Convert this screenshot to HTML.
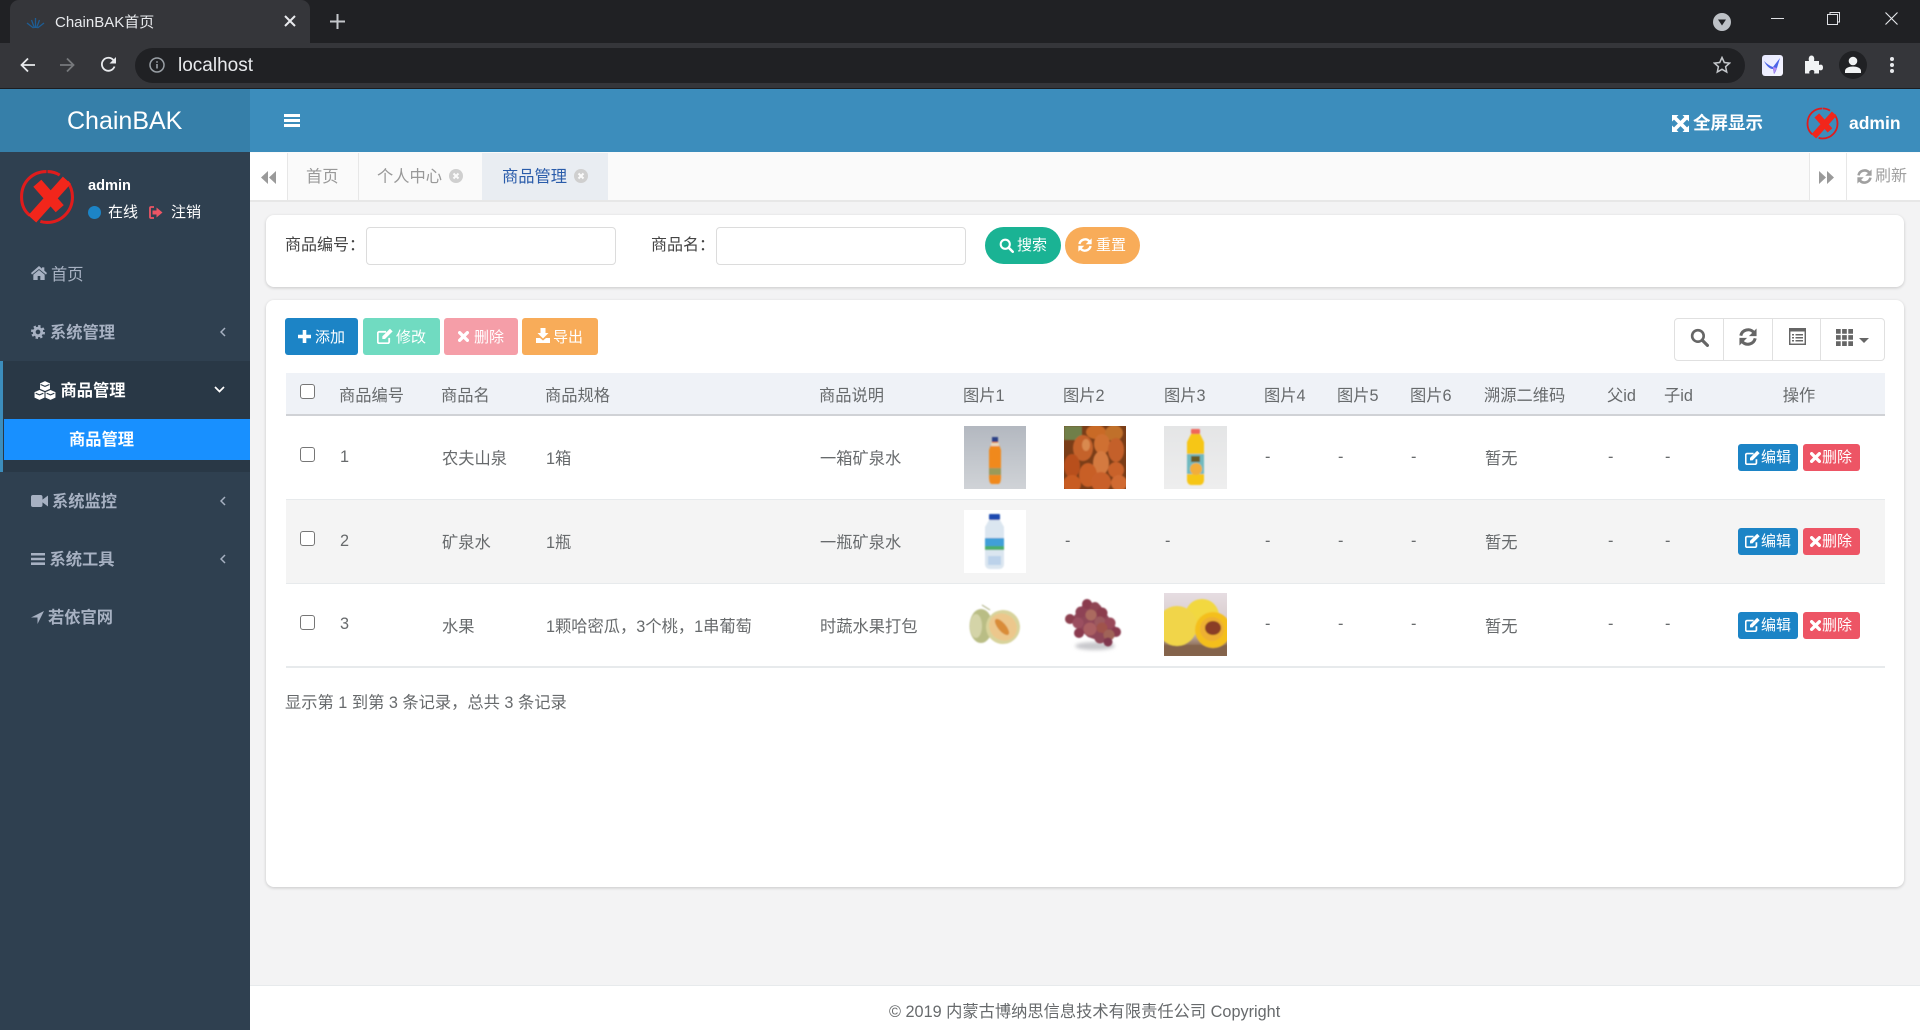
<!DOCTYPE html>
<html lang="zh-CN">
<head>
<meta charset="utf-8">
<title>ChainBAK首页</title>
<style>
*{box-sizing:border-box}
html,body{margin:0;padding:0;width:1920px;height:1030px;overflow:hidden;background:#f3f3f4;font-family:"Liberation Sans","Noto Sans CJK SC",sans-serif;color:#676a6c;font-size:16.25px}
.a{position:absolute}
.t{position:absolute;white-space:nowrap;line-height:20px;height:20px}
svg{position:absolute;display:block;overflow:hidden}
.menu{color:#a7b1c2;font-size:16.25px;font-weight:700}
.card{position:absolute;background:#fff;border-radius:8px;box-shadow:0 1px 3px rgba(0,0,0,.18)}
.inp{position:absolute;top:227px;width:250px;height:38px;border:1px solid #dcdcdc;border-radius:4px;background:#fff}
.btn{position:absolute;top:318px;height:37px;border-radius:3px}
.btn .t{color:#fff;font-size:15px;top:10px}
table{position:absolute;left:286px;top:373px;width:1599px;border-collapse:collapse;table-layout:fixed;color:#676a6c;font-size:16.25px}
th{height:42px;background:#eff2f7;font-weight:400;text-align:left;padding:0;border-bottom:2px solid #d0d2d6}
th.n{text-indent:-1px}
td{padding:0 0 0 1px;border-bottom:1px solid #e7eaec;vertical-align:middle}
tr.r td{height:84px}
tr.s td{background:#f4f4f4}
tr.l td{border-bottom:2px solid #e7eaec}
.cb{display:block;position:relative;width:15px;height:15px;margin-left:14px;border:1.5px solid #767676;border-radius:3px;background:#fff;top:-2.5px}
.ph{position:relative;display:block;width:62px;height:63px}
.op{position:relative;display:block;width:172px;height:27px;top:.5px}
.op i{position:absolute;top:0;height:27px;border-radius:3px;color:#fff;font-style:normal;font-size:15px;line-height:27px;white-space:nowrap}
.e{left:25px;width:60px;background:#1c84c6;padding-left:23px}
.d{left:90px;width:57px;background:#ed5565;padding-left:19px}
</style>
</head>
<body>
<svg width="0" height="0" style="position:absolute">
<defs>
<filter id="bl" x="-20%" y="-20%" width="140%" height="140%"><feGaussianBlur stdDeviation=".9"/></filter>
<filter id="bl2" x="-50%" y="-50%" width="200%" height="200%"><feGaussianBlur stdDeviation="1.8"/></filter>
<symbol id="x" viewBox="0 0 55 55">
<path d="M27 2.500C13 2.500 2.500 13 2.500 27.500c0 8 3 14 8 18M21 51.500c2 .6 4.500 1 6.500 1 14 0 25-11 25-25 0-6-2-11-5-15M40 6c-3-2-8-3.500-12-3.500" fill="none" stroke="#e01c1c" stroke-width="3"/>
<path d="M47 11L13 49M18 14L40 39" fill="none" stroke="#f2261b" stroke-width="10.500"/>
</symbol>
<symbol id="edit" viewBox="2 1 21 21">
<path d="M18 14v5a2 2 0 0 1-2 2H5a2 2 0 0 1-2-2V8a2 2 0 0 1 2-2h9" fill="none" stroke="#fff" stroke-width="2.400"/>
<path d="M9 12L19 2l3.500 3.500-10 10H9z" fill="#fff"/>
</symbol>
<symbol id="del" viewBox="2 2 20 20"><path d="M5 5l14 14M19 5L5 19" stroke="#fff" stroke-width="6" fill="none" stroke-linecap="round"/></symbol>
<symbol id="ref" viewBox="2 2 20 20">
<path d="M4 10.500A8.300 8.300 0 0 1 18.500 7" fill="none" stroke="currentColor" stroke-width="3.400"/>
<path d="M21.500 2.500v8.500h-8.500z" fill="currentColor"/>
<path d="M20 13.500A8.300 8.300 0 0 1 5.500 17" fill="none" stroke="currentColor" stroke-width="3.400"/>
<path d="M2.500 21.500v-8.500h8.500z" fill="currentColor"/>
</symbol>
<symbol id="srch" viewBox="0 0 24 24"><circle cx="10" cy="10" r="7.300" fill="none" stroke="currentColor" stroke-width="3.300"/><path d="M15.500 15.500l6.500 6.500" stroke="currentColor" stroke-width="4" stroke-linecap="round"/></symbol>
<symbol id="cl" viewBox="0 0 14 14"><circle cx="7" cy="7" r="7" fill="#cfcfcf"/><path d="M4.500 4.500l5 5M9.500 4.500l-5 5" stroke="#fafafa" stroke-width="2"/></symbol>
</defs>
</svg>

<!-- browser chrome -->
<div class="a" style="left:0;top:0;width:1920px;height:43px;background:#202124"></div>
<div class="a" style="left:0;top:43px;width:1920px;height:45px;background:#35363a"></div>
<div class="a" style="left:0;top:88px;width:1920px;height:1px;background:#1c1d20"></div>
<div class="a" style="left:10px;top:0;width:300px;height:43px;background:#35363a;border-radius:9px 9px 0 0"></div>
<svg style="left:26px;top:17px" width="19" height="12" viewBox="0 0 19 12"><path d="M9.500 1v10M5.500 3l3 8M13.500 3l-3 8M1 6l6.500 5M18 6l-6.500 5" stroke="#1e5d94" stroke-width="1.300" fill="none"/></svg>
<div class="t" style="left:55px;top:13px;color:#e8eaed;font-size:15px">ChainBAK首页</div>
<svg style="left:284px;top:15px" width="12" height="12" viewBox="0 0 12 12"><path d="M1 1l10 10M11 1L1 11" stroke="#e8eaed" stroke-width="2"/></svg>
<svg style="left:330px;top:14px" width="15" height="15" viewBox="0 0 15 15"><path d="M7.500 0v15M0 7.500h15" stroke="#c4c7cb" stroke-width="2"/></svg>
<svg style="left:1713px;top:13px" width="18" height="18" viewBox="0 0 18 18"><circle cx="9" cy="9" r="9" fill="#bdc1c6"/><path d="M5 6.500h8L9 12.500z" fill="#202124"/></svg>
<div class="a" style="left:1771px;top:18px;width:13px;height:1px;background:#dfe1e5"></div>
<svg style="left:1827px;top:12px" width="13" height="13" viewBox="0 0 13 13"><rect x=".5" y="2.500" width="10" height="10" fill="none" stroke="#dfe1e5"/><path d="M3 2.500V.5h9.500V10h-2" fill="none" stroke="#dfe1e5"/></svg>
<svg style="left:1885px;top:12px" width="13" height="13" viewBox="0 0 13 13"><path d="M.5.500l12 12M12.500.5l-12 12" stroke="#e8eaed" stroke-width="1.100"/></svg>

<svg style="left:20px;top:57px" width="16" height="16" viewBox="0 0 16 16"><path d="M15 8H2M8 1.500L1.500 8 8 14.500" fill="none" stroke="#e8eaed" stroke-width="1.800"/></svg>
<svg style="left:59px;top:57px" width="16" height="16" viewBox="0 0 16 16"><path d="M1 8h13M8 1.500L14.500 8 8 14.500" fill="none" stroke="#77797c" stroke-width="1.800"/></svg>
<svg style="left:100px;top:56px" width="17" height="17" viewBox="0 0 17 17"><path d="M14.500 10.500A6.500 6.500 0 1 1 13.300 4" fill="none" stroke="#e8eaed" stroke-width="1.800"/><path d="M16 1v6.500H9.500z" fill="#e8eaed"/></svg>
<div class="a" style="left:135px;top:48px;width:1610px;height:35px;border-radius:18px;background:#202124"></div>
<svg style="left:149px;top:57px" width="16" height="16" viewBox="0 0 16 16"><circle cx="8" cy="8" r="7" fill="none" stroke="#9aa0a6" stroke-width="1.500"/><path d="M8 7v4.500M8 4.200v1.600" stroke="#9aa0a6" stroke-width="1.600"/></svg>
<div class="t" style="left:178px;top:56px;color:#e8eaed;font-size:19px">localhost</div>
<svg style="left:1713px;top:56px" width="18" height="18" viewBox="0 0 18 18"><path d="M9 1.500l2.300 5 5.300.6-4 3.600 1.100 5.300L9 13.300 4.300 16l1.100-5.300-4-3.600 5.300-.6z" fill="none" stroke="#c4c7cb" stroke-width="1.500"/></svg>
<div class="a" style="left:1762px;top:55px;width:21px;height:21px;border-radius:3px;background:linear-gradient(135deg,#e6e8ff,#f6f6ff)"></div>
<svg style="left:1763px;top:56px" width="19" height="19" viewBox="0 0 19 19"><path d="M1 5c3 3 6 5 9 6l7-9-3 10c-1 3-2 5-3 6l-1-5c-4 0-7-4-9-8z" fill="#4a63e8"/><path d="M10 11l4 1-3 6z" fill="#b58bf0"/></svg>
<svg style="left:1804px;top:55px" width="19" height="19" viewBox="0 0 19 19"><path d="M1 6h4c-1-4 1-5.500 2.500-5.500S11 2 10 6h5v4c3-1 4 .5 4 2.500S18 16 15 15v3.500H10c1-3-.5-3.500-2-3.500S4.500 16 5.500 18.500H1z" fill="#f1f3f4"/></svg>
<div class="a" style="left:1839px;top:51px;width:28px;height:28px;border-radius:50%;background:#202124"></div>
<svg style="left:1844px;top:56px" width="18" height="18" viewBox="0 0 18 18"><circle cx="9" cy="5" r="4.300" fill="#f1f3f4"/><path d="M1 17v-2c0-3 4-4.500 8-4.500s8 1.500 8 4.500v2z" fill="#f1f3f4"/></svg>
<svg style="left:1889px;top:56px" width="6" height="18" viewBox="0 0 6 18"><circle cx="3" cy="3" r="2" fill="#e8eaed"/><circle cx="3" cy="9" r="2" fill="#e8eaed"/><circle cx="3" cy="15" r="2" fill="#e8eaed"/></svg>

<!-- app header -->
<div class="a" style="left:0;top:89px;width:250px;height:63px;background:#367fa9"></div>
<div class="a" style="left:250px;top:89px;width:1670px;height:63px;background:#3c8dbc"></div>
<div class="t" style="left:67px;top:111px;color:#fff;font-size:25px">ChainBAK</div>
<svg style="left:284px;top:114px" width="16" height="13" viewBox="0 0 16 13"><path d="M0 0h16v3H0zM0 5h16v3H0zM0 10h16v3H0z" fill="#fff"/></svg>
<svg style="left:1672px;top:115px" width="17" height="17" viewBox="0 0 17 17"><path d="M0 0h6.500L4.600 2 8.500 5.900 12.400 2 10.500 0H17v6.500L15 4.600 11.100 8.500 15 12.400 17 10.500V17h-6.500l1.900-2-3.900-3.900L4.600 15l1.900 2H0v-6.500L2 12.400 5.900 8.500 2 4.600 0 6.500z" fill="#fff"/></svg>
<div class="t" style="left:1693px;top:113px;color:#fff;font-weight:700;font-size:17.500px">全屏显示</div>
<svg style="left:1806px;top:107px" width="33" height="33"><use href="#x"/></svg>
<div class="t" style="left:1849px;top:113px;color:#fff;font-weight:700;font-size:17.500px">admin</div>

<!-- sidebar -->
<div class="a" style="left:0;top:152px;width:250px;height:878px;background:#2f4050"></div>
<svg style="left:19px;top:169px" width="56" height="56"><use href="#x"/></svg>
<div class="t" style="left:88px;top:176px;color:#fff;font-weight:700;font-size:14.600px">admin</div>
<div class="a" style="left:87.500px;top:205.500px;width:13px;height:13px;border-radius:50%;background:#1c84c6"></div>
<div class="t" style="left:108px;top:203px;color:#fff;font-size:15px">在线</div>
<svg style="left:149px;top:206px" width="14" height="13" viewBox="0 0 14 13"><path d="M5 1H2a1 1 0 0 0-1 1v9a1 1 0 0 0 1 1h3" fill="none" stroke="#ed5565" stroke-width="1.800"/><path d="M3.500 4.500h4V1.500L13.500 6.500 7.500 11.500v-3h-4z" fill="#ed5565"/></svg>
<div class="t" style="left:171px;top:203px;color:#fff;font-size:15px">注销</div>

<svg style="left:31px;top:266px" width="16" height="14" viewBox="0 0 24 21"><path d="M12 0L0 10.500l1.500 2.500L12 4.500 22.500 13 24 10.500l-4-3.500V2h-3.500v2zM3.500 13V21h6.500v-6h4v6h6.500v-8L12 6z" fill="#a7b1c2"/></svg>
<div class="t menu" style="left:51px;top:264.500px;font-weight:400">首页</div>

<svg style="left:31px;top:325px" width="14" height="14" viewBox="0 0 24 24"><circle cx="12" cy="12" r="6.500" fill="none" stroke="#a7b1c2" stroke-width="5"/><circle cx="12" cy="12" r="10" fill="none" stroke="#a7b1c2" stroke-width="4" stroke-dasharray="4 3.850"/></svg>
<div class="t menu" style="left:50px;top:323px">系统管理</div>
<svg style="left:220px;top:327px" width="6" height="10" viewBox="0 0 6 10"><path d="M5 1L1 5l4 4" fill="none" stroke="#a7b1c2" stroke-width="1.500"/></svg>

<div class="a" style="left:0;top:361px;width:250px;height:111px;background:#293846"></div>
<div class="a" style="left:0;top:361px;width:3px;height:111px;background:#3c8dbc"></div>
<svg style="left:34px;top:381px" width="22" height="19" viewBox="0 0 20 17"><path d="M10 0l4.500 2v5L10 9 5.500 7V2zM5 8l4.500 2v5L5 17 .5 15v-5zM15 8l4.500 2v5L15 17l-4.500-2v-5z" fill="#fff"/><path d="M6 3l4 1.800L14 3M1.500 11L5 12.500 8.500 11M11.500 11l3.500 1.500 3.500-1.500" stroke="#293846" fill="none"/></svg>
<div class="t menu" style="left:60.500px;top:381px;color:#fff">商品管理</div>
<svg style="left:214px;top:386px" width="11" height="7" viewBox="0 0 11 7"><path d="M1 1l4.500 4.500L10 1" fill="none" stroke="#fff" stroke-width="1.700"/></svg>
<div class="a" style="left:4px;top:419px;width:246px;height:41px;background:#1890ff"></div>
<div class="t menu" style="left:69px;top:430px;color:#fff">商品管理</div>

<svg style="left:31px;top:495px" width="17" height="12" viewBox="0 0 17 12"><rect width="11.500" height="12" rx="2" fill="#a7b1c2"/><path d="M11 5l6-4.500v11L11 7z" fill="#a7b1c2"/></svg>
<div class="t menu" style="left:52px;top:492px">系统监控</div>
<svg style="left:220px;top:496px" width="6" height="10" viewBox="0 0 6 10"><path d="M5 1L1 5l4 4" fill="none" stroke="#a7b1c2" stroke-width="1.500"/></svg>

<svg style="left:31px;top:553px" width="14" height="12" viewBox="0 0 14 12"><path d="M0 0h14v2.500H0zM0 4.700h14v2.500H0zM0 9.400h14V12H0z" fill="#a7b1c2"/></svg>
<div class="t menu" style="left:49.500px;top:550px">系统工具</div>
<svg style="left:220px;top:554px" width="6" height="10" viewBox="0 0 6 10"><path d="M5 1L1 5l4 4" fill="none" stroke="#a7b1c2" stroke-width="1.500"/></svg>

<svg style="left:31px;top:611px" width="13" height="13" viewBox="0 0 13 13"><path d="M13 0L0 6.500h6.500V13z" fill="#a7b1c2"/></svg>
<div class="t menu" style="left:48px;top:608px">若依官网</div>

<!-- tabs -->
<div class="a" style="left:250px;top:152px;width:1670px;height:50px;background:#fafafa;border-bottom:2px solid #e7e7e7"></div>
<div class="a" style="left:250px;top:153px;width:37px;height:47px;background:#fff"></div>
<div class="a" style="left:287px;top:153px;width:1px;height:47px;background:#e7e7e7"></div>
<div class="a" style="left:358px;top:153px;width:1px;height:47px;background:#e7e7e7"></div>
<div class="a" style="left:482px;top:153px;width:126px;height:47px;background:#e9edf2"></div>
<svg style="left:261px;top:171px" width="15" height="13" viewBox="0 0 15 13"><path d="M7 0v13L0 6.500zM15 0v13L8 6.500z" fill="#9a9a9a"/></svg>
<div class="t" style="left:306px;top:167px;color:#999">首页</div>
<div class="t" style="left:377px;top:167px;color:#999">个人中心</div>
<svg style="left:449px;top:169px" width="14" height="14"><use href="#cl"/></svg>
<div class="t" style="left:502px;top:167px;color:#2a5caa">商品管理</div>
<svg style="left:574px;top:169px" width="14" height="14"><use href="#cl"/></svg>
<div class="a" style="left:1809px;top:153px;width:1px;height:47px;background:#e7e7e7"></div>
<div class="a" style="left:1810px;top:153px;width:110px;height:47px;background:#fff"></div>
<div class="a" style="left:1846px;top:153px;width:1px;height:47px;background:#e7e7e7"></div>
<svg style="left:1819px;top:171px" width="15" height="13" viewBox="0 0 15 13"><path d="M0 0v13L7 6.500zM8 0v13L15 6.500z" fill="#9a9a9a"/></svg>
<svg style="left:1857px;top:169px;color:#a0a0a0" width="15" height="15"><use href="#ref"/></svg>
<div class="t" style="left:1875px;top:167px;color:#a0a0a0;font-size:16px">刷新</div>

<!-- search card -->
<div class="card" style="left:266px;top:215px;width:1638px;height:72px"></div>
<div class="t" style="left:285px;top:236px;color:#444;font-size:16px">商品编号：</div>
<div class="inp" style="left:366px"></div>
<div class="t" style="left:651px;top:236px;color:#444;font-size:16px">商品名：</div>
<div class="inp" style="left:716px"></div>
<div class="a" style="left:985px;top:227px;width:76px;height:37px;border-radius:19px;background:#1ab394"></div>
<svg style="left:999px;top:238px;color:#fff" width="15" height="15"><use href="#srch"/></svg>
<div class="t" style="left:1017px;top:236px;color:#fff;font-size:15px">搜索</div>
<div class="a" style="left:1065px;top:227px;width:75px;height:37px;border-radius:19px;background:#f8ac59"></div>
<svg style="left:1078px;top:238px;color:#fff" width="14" height="14"><use href="#ref"/></svg>
<div class="t" style="left:1096px;top:236px;color:#fff;font-size:15px">重置</div>

<!-- table card -->
<div class="card" style="left:266px;top:300px;width:1638px;height:587px"></div>

<div class="btn" style="left:285px;width:73px;background:#1c84c6"><svg style="left:13px;top:12px" width="13" height="13" viewBox="0 0 13 13"><path d="M6.500 0v13M0 6.500h13" stroke="#fff" stroke-width="3.600"/></svg><span class="t" style="left:30px">添加</span></div>
<div class="btn" style="left:363px;width:77px;background:#70dbc1"><svg style="left:14px;top:10px" width="16" height="16"><use href="#edit"/></svg><span class="t" style="left:33px">修改</span></div>
<div class="btn" style="left:444px;width:74px;background:#f59ea8"><svg style="left:14px;top:13px" width="11" height="11"><use href="#del"/></svg><span class="t" style="left:30px">删除</span></div>
<div class="btn" style="left:522px;width:76px;background:#f8ac59"><svg style="left:14px;top:10px" width="14" height="15" viewBox="0 0 14 15"><path d="M4.500 0h5v5h3L7 10.500 1.500 5h3zM0 10h4l3 2.500L10 10h4v5H0z" fill="#fff"/></svg><span class="t" style="left:31px">导出</span></div>

<div class="a" style="left:1674px;top:318px;width:211px;height:43px;border:1px solid #e0e0e0;border-radius:4px;background:#fff"></div>
<div class="a" style="left:1723px;top:319px;width:1px;height:41px;background:#e0e0e0"></div>
<div class="a" style="left:1772px;top:319px;width:1px;height:41px;background:#e0e0e0"></div>
<div class="a" style="left:1820px;top:319px;width:1px;height:41px;background:#e0e0e0"></div>
<svg style="left:1690px;top:328px;color:#666" width="19" height="19"><use href="#srch"/></svg>
<svg style="left:1739px;top:328px;color:#666" width="18" height="18"><use href="#ref"/></svg>
<svg style="left:1789px;top:328px" width="17" height="17" viewBox="0 0 17 17"><rect x=".7" y=".7" width="15.600" height="15.600" fill="none" stroke="#666" stroke-width="1.500"/><path d="M0 0h17v3.500H0zM3 6h2v1.500H3zM6.500 6H14v1.500H6.500zM3 9h2v1.500H3zM6.500 9H14v1.500H6.500zM3 12h2v1.500H3zM6.500 12H14v1.500H6.500z" fill="#666"/></svg>
<svg style="left:1836px;top:329px" width="17" height="17" viewBox="0 0 17 17"><path d="M0 0h4.700v4.700H0zM6.100 0h4.700v4.700H6.100zM12.300 0H17v4.700h-4.700zM0 6.100h4.700v4.700H0zM6.100 6.100h4.700v4.700H6.100zM12.300 6.100H17v4.700h-4.700zM0 12.300h4.700V17H0zM6.100 12.300h4.700V17H6.100zM12.300 12.300H17V17h-4.700z" fill="#666"/></svg>
<svg style="left:1859px;top:338px" width="10" height="5" viewBox="0 0 10 5"><path d="M0 0h10L5 5z" fill="#666"/></svg>

<table>
<colgroup><col style="width:53px"><col style="width:102px"><col style="width:104px"><col style="width:274px"><col style="width:145px"><col style="width:100px"><col style="width:100px"><col style="width:100px"><col style="width:73px"><col style="width:73px"><col style="width:74px"><col style="width:123px"><col style="width:57px"><col style="width:49px"><col style="width:172px"></colgroup>
<tr><th><span class="cb"></span></th><th>商品编号</th><th>商品名</th><th>商品规格</th><th>商品说明</th><th class="n">图片1</th><th class="n">图片2</th><th>图片3</th><th>图片4</th><th>图片5</th><th>图片6</th><th>溯源二维码</th><th>父id</th><th>子id</th><th style="text-align:center">操作</th></tr>

<tr class="r"><td style="padding:0"><span class="cb"></span></td><td>1</td><td>农夫山泉</td><td>1箱</td><td>一箱矿泉水</td>
<td style="padding:0"><span class="ph"><svg width="62" height="63" viewBox="0 0 62 63" style="background:linear-gradient(#b3b8c0,#d0d3d7)"><g filter="url(#bl)"><rect x="28" y="11" width="6" height="5" fill="#2a3f86"/><path d="M28 16h6l3 8v26c0 6-1 8-3 8h-6c-2 0-3-2-3-8V24z" fill="#f0891a"/><rect x="25" y="42" width="12" height="7" fill="#9a9a5a"/><rect x="27" y="17" width="8" height="3" fill="#e6d8c0"/></g></svg></span></td>
<td style="padding:0"><span class="ph"><svg width="62" height="63" viewBox="0 0 62 63" style="background:#7a3d18"><g filter="url(#bl)"><rect x="0" y="0" width="18" height="14" fill="#6f7f4a"/><ellipse cx="32" cy="6" rx="10" ry="7" fill="#c96a28"/><ellipse cx="50" cy="7" rx="9" ry="8" fill="#c0702c"/><ellipse cx="19" cy="22" rx="10" ry="13" fill="#c4622a"/><ellipse cx="38" cy="18" rx="8" ry="10" fill="#cf6f30"/><ellipse cx="52" cy="24" rx="8" ry="12" fill="#c4602a"/><ellipse cx="8" cy="40" rx="8" ry="12" fill="#b8501f"/><ellipse cx="37" cy="37" rx="8" ry="12" fill="#d47a40"/><ellipse cx="24" cy="49" rx="9" ry="12" fill="#c85f26"/><ellipse cx="52" cy="44" rx="8" ry="8" fill="#c9622a"/><ellipse cx="37" cy="56" rx="10" ry="10" fill="#c9602a"/><ellipse cx="55" cy="57" rx="8" ry="8" fill="#d06a30"/><ellipse cx="8" cy="58" rx="9" ry="9" fill="#c85c22"/><ellipse cx="22" cy="19" rx="4" ry="6" fill="#d98a50"/></g></svg></span></td>
<td style="padding:0"><span class="ph" style="width:63px"><svg width="63" height="63" viewBox="0 0 63 63" style="background:linear-gradient(#e4e5e6,#eeeeee)"><g filter="url(#bl)"><rect x="27" y="3" width="9" height="5" rx="1" fill="#f0655a"/><path d="M27 8h9l4 8v38c0 3-2 5-4 5h-9c-2 0-4-2-4-5V16z" fill="#f6c618"/><rect x="23" y="28" width="17" height="20" fill="#6fb9c0"/><ellipse cx="32" cy="43" rx="6" ry="6" fill="#f2ae3a"/><rect x="27" y="30" width="9" height="6" fill="#6b5a20"/></g></svg></span></td>
<td>-</td><td>-</td><td>-</td><td>暂无</td><td>-</td><td>-</td>
<td style="padding:0"><span class="op"><i class="e"><svg style="left:7px;top:6px" width="15" height="15"><use href="#edit"/></svg>编辑</i><i class="d"><svg style="left:7px;top:8px" width="11" height="11"><use href="#del"/></svg>删除</i></span></td></tr>

<tr class="r s"><td style="padding:0"><span class="cb"></span></td><td>2</td><td>矿泉水</td><td>1瓶</td><td>一瓶矿泉水</td>
<td style="padding:0"><span class="ph"><svg width="62" height="63" viewBox="0 0 62 63" style="background:#fff"><g filter="url(#bl)"><rect x="25" y="4" width="11" height="6" rx="1" fill="#1c49b0"/><path d="M25 10h11l4 7v37c0 3-2 5-5 5H26c-3 0-5-2-5-5V17z" fill="#dbe6f0"/><rect x="21" y="28" width="19" height="12" fill="#3f9fd8"/><rect x="21" y="36" width="19" height="4" fill="#4cae6a"/><path d="M24 46h13v9H24z" fill="#bcd2ea"/></g></svg></span></td>
<td>-</td><td>-</td><td>-</td><td>-</td><td>-</td><td>暂无</td><td>-</td><td>-</td>
<td style="padding:0"><span class="op"><i class="e"><svg style="left:7px;top:5px" width="15" height="15"><use href="#edit"/></svg>编辑</i><i class="d"><svg style="left:7px;top:8px" width="11" height="11"><use href="#del"/></svg>删除</i></span></td></tr>

<tr class="r l"><td style="padding:0"><span class="cb"></span></td><td>3</td><td>水果</td><td>1颗哈密瓜，3个桃，1串葡萄</td><td>时蔬水果打包</td>
<td style="padding:0"><span class="ph"><svg width="62" height="63" viewBox="0 0 62 63" style="background:#fff"><g filter="url(#bl)"><ellipse cx="17" cy="33" rx="11.500" ry="17" fill="#b9bd85"/><ellipse cx="12" cy="33" rx="6" ry="12" fill="#d4d4a8"/><ellipse cx="39" cy="34" rx="17" ry="17" transform="rotate(40 39 34)" fill="#d8d39b"/><ellipse cx="39" cy="34" rx="14.500" ry="13" transform="rotate(40 39 34)" fill="#ecc78c"/><ellipse cx="38" cy="34" rx="10" ry="4" transform="rotate(50 38 34)" fill="#d98c38"/><path d="M18 12l8 5" stroke="#a0a470" stroke-width="1"/></g></svg></span></td>
<td style="padding:0"><span class="ph"><svg width="62" height="63" viewBox="0 0 62 63" style="background:#fff"><ellipse cx="31" cy="53" rx="20" ry="4" fill="#c8c8cc" filter="url(#bl2)"/><g filter="url(#bl)"><path d="M22 8l14 4 10 14 10 14-14 10-18-6-18-16z" fill="#8f4658"/><circle cx="23" cy="11" r="5" fill="#8a3a4e"/><circle cx="31" cy="14" r="5" fill="#8f4452"/><circle cx="17" cy="19" r="5.500" fill="#8e4354"/><circle cx="27" cy="22" r="5.500" fill="#ab6a5e"/><circle cx="38" cy="20" r="5.500" fill="#8b3c4e"/><circle cx="6" cy="26" r="5" fill="#8d4050"/><circle cx="14" cy="30" r="5.500" fill="#9b5060"/><circle cx="36" cy="29" r="5.500" fill="#9c5a5e"/><circle cx="46" cy="30" r="5.500" fill="#99485a"/><circle cx="26" cy="36" r="6.500" fill="#aa5f62"/><circle cx="38" cy="35" r="5.500" fill="#a0524c"/><circle cx="52" cy="39" r="5" fill="#8a3a50"/><circle cx="15" cy="40" r="5" fill="#8a3a50"/><circle cx="36" cy="45" r="5.500" fill="#8e4658"/><circle cx="45" cy="42" r="5.500" fill="#a06458"/><circle cx="44" cy="49" r="4.500" fill="#803850"/></g></svg></span></td>
<td style="padding:0"><span class="ph" style="width:63px"><svg width="63" height="63" viewBox="0 0 63 63" style="background:linear-gradient(#e6dde2 0,#d4c6c4 60%,#8a6a52 85%)"><g filter="url(#bl)"><rect y="52" width="63" height="11" fill="#84644c"/><circle cx="38" cy="23" r="17" fill="#f2d840"/><circle cx="13" cy="33" r="20" fill="#f1d548"/><circle cx="49" cy="37" r="18" fill="#f4bf1c"/><circle cx="48" cy="36" r="12" fill="#eeb030"/><ellipse cx="49" cy="35" rx="8" ry="7" fill="#8a3c26"/></g></svg></span></td>
<td>-</td><td>-</td><td>-</td><td>暂无</td><td>-</td><td>-</td>
<td style="padding:0"><span class="op"><i class="e"><svg style="left:7px;top:5px" width="15" height="15"><use href="#edit"/></svg>编辑</i><i class="d"><svg style="left:7px;top:8px" width="11" height="11"><use href="#del"/></svg>删除</i></span></td></tr>
</table>

<div class="t" style="left:285px;top:692.500px;font-size:16.250px">显示第 1 到第 3 条记录，总共 3 条记录</div>

<!-- footer -->
<div class="a" style="left:250px;top:985px;width:1670px;height:45px;background:#fff;border-top:1px solid #e7eaec"></div>
<div class="t" style="left:889px;top:1001.500px;font-size:16.250px;color:#676a6c">© 2019 内蒙古博纳思信息技术有限责任公司 Copyright</div>
</body>
</html>
